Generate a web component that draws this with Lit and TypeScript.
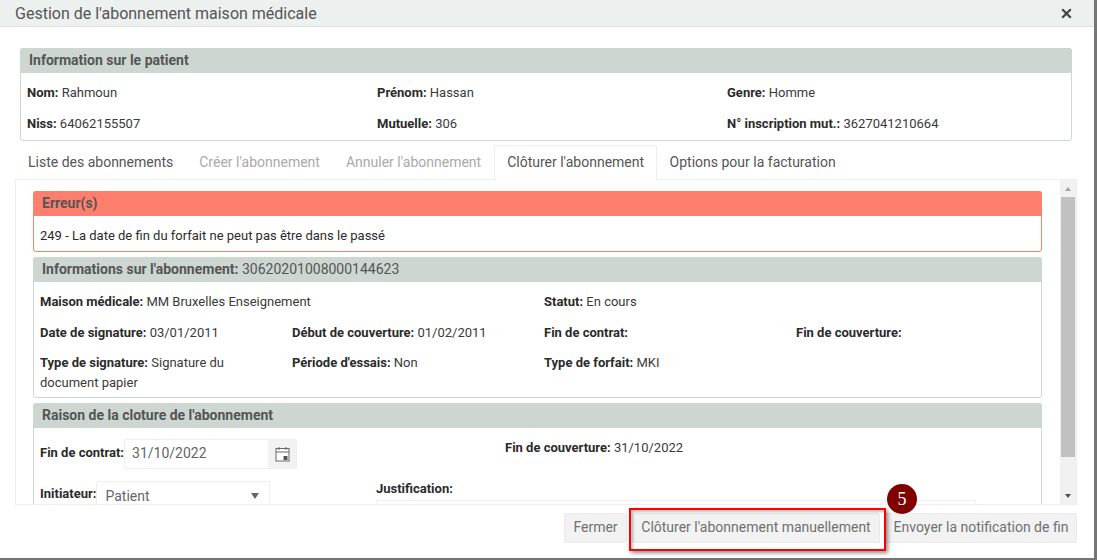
import { LitElement, html, css } from "lit";
import { customElement } from "lit/decorators.js";

@customElement("app-root")
export class AppRoot extends LitElement {
  static styles = css`
    :host { display: block; position: relative; width: 1097px; height: 560px; overflow: hidden; background: #fff; font-family: Roboto, sans-serif; font-size: 13px; color: #3a3a3a; }
    * { box-sizing: border-box; }
    b { font-weight: 700; color: #2b2b2b; }
    .modal { width: 1097px; height: 560px; border-right: 3px solid #757575; border-bottom: 2px solid #757575; display: flex; flex-direction: column; }
    .head { height: 27px; flex: none; background: #ecf0ee; border-bottom: 1px solid #dde2df; display: flex; align-items: center; justify-content: space-between; padding: 0 22px 0 15px; font-size: 16px; color: #555; }
    .close { width: 11px; height: 11px; display: block; }
    .patient { margin: 21px 22px 0 20px; flex: none; }
    .panel { border: 1px solid #cdd6d1; border-radius: 3px; background: #fff; }
    .panel .ttl { height: 25px; margin: -1px -1px 0; background: #cdd6d1; border-radius: 3px 3px 0 0; padding: 0 9px 2px; display: flex; align-items: center; font-size: 14px; font-weight: 700; color: #555; white-space: pre; }
    .panel .ttl span { font-weight: 400; }
    .pgrid { display: grid; grid-template-columns: repeat(3, 350px); padding: 4px 6px 1px; grid-auto-rows: 31px; align-items: center; }
    .tabs { flex: none; display: flex; height: 34px; margin: 4px 0 0 15px; position: relative; z-index: 1; font-size: 14px; }
    .tab { padding: 0 13px; height: 34px; display: flex; align-items: center; color: #555; white-space: nowrap; }
    .tab.off { color: #aaa; }
    .tab.on { background: #fff; border: 1px solid #eee; border-bottom: 0; border-radius: 2px 2px 0 0; padding: 0 11.5px 2px 12px; height: 35px; }
    .pane { margin: 0 17px 0 15px; height: 326px; flex: none; border: 1px solid #eee; display: flex; overflow: hidden; }
    .scroll { flex: 1; min-width: 0; overflow: hidden; padding: 11px 18px 0 17px; display: flex; flex-direction: column; gap: 5px; }
    .scroll .panel { flex: none; }
    .err { border-color: #ff7f6e; }
    .err .ttl { background: #ff7f6e; }
    .errbody { height: 35px; display: flex; align-items: center; padding: 3px 6px 0; color: #2b2b2b; }
    .igrid { display: grid; grid-template-columns: repeat(4, 252px); padding: 5px 6px 0; line-height: 20px; }
    .igrid > div { padding: 5px 0 6px; }
    .igrid .w2 { grid-column: span 2; }
    .igrid > .wrap { padding: 4px 40px 4px 0; }
    .igrid > .r3 { padding: 4px 0; }
    .form { padding: 11px 6px 0; }
    .f1 { display: flex; height: 42px; }
    .f1 .l { width: 465px; display: flex; flex: none; }
    .lab { font-weight: 700; color: #2b2b2b; white-space: nowrap; }
    .f1 .lab { padding-top: 6px; }
    .f1 .cov { padding-top: 1px; }
    .inp { width: 173px; height: 30px; border: 1px solid #eee; border-radius: 2px; display: flex; font-size: 14px; color: #666; }
    .inp .v { flex: 1; padding: 5px 7px; }
    .inp .btn { width: 28px; background: #f2f2f2; display: flex; align-items: center; justify-content: center; }
    .f2 { display: flex; }
    .f2 .l { width: 336px; flex: none; display: flex; }
    .f2 .l .lab { padding-top: 5px; }
    .sel { width: 174px; height: 30px; border: 1px solid #eee; border-radius: 2px; display: flex; align-items: center; justify-content: space-between; padding: 0 10px 0 8px; font-size: 14px; color: #666; }
    .caret { width: 0; height: 0; border-left: 4px solid transparent; border-right: 4px solid transparent; border-top: 6px solid #666; }
    .ta { width: 600px; height: 40px; margin-top: 4px; border: 1px solid #eee; border-radius: 2px; }
    .sb { width: 16px; flex: none; background: #f1f1f1; display: flex; flex-direction: column; padding: 0 1px; }
    .sb .arr { height: 17px; flex: none; display: flex; align-items: center; justify-content: center; }
    .sb .thumb { height: 260px; flex: none; background: #c1c1c1; }
    .sb .sp { flex: 1; }
    .up { width: 0; height: 0; border-left: 3.5px solid transparent; border-right: 3.5px solid transparent; border-bottom: 4px solid #a3a3a3; }
    .down { width: 0; height: 0; border-left: 3.5px solid transparent; border-right: 3.5px solid transparent; border-top: 4px solid #505050; }
    .foot { flex: none; display: flex; justify-content: flex-end; gap: 5px; padding: 8px 17px 0 0; }
    .b { height: 30px; padding-bottom: 2px; background: #f2f2f2; border: 1px solid #eaeaea; border-radius: 2px; display: flex; align-items: center; justify-content: center; font-size: 14px; color: #707070; white-space: nowrap; }
    .b1 { width: 63px; }
    .b2 { width: 248px; }
    .b3 { width: 192px; }
    .mark { position: absolute; left: 629px; top: 508px; width: 257px; height: 43px; border: 2px solid #f00; box-shadow: 2px 2px 4px rgba(0,0,0,.45), inset 2px 2px 3px rgba(0,0,0,.25); }
    .badge { position: absolute; left: 887px; top: 484px; width: 30px; height: 30px; border-radius: 50%; background: #800000; color: #fff; font-family: "Liberation Serif", serif; font-size: 18px; display: flex; align-items: center; justify-content: center; }
  `;

  render() {
    return html`
      <div class="modal">
        <div class="head">
          <span>Gestion de l'abonnement maison médicale</span>
          <svg class="close" viewBox="0 0 11 11"><path d="M1.2 1.2 9.8 9.8M9.8 1.2 1.2 9.8" stroke="#444" stroke-width="2.2" fill="none"/></svg>
        </div>
        <div class="panel patient">
          <div class="ttl">Information sur le patient</div>
          <div class="pgrid">
            <div><b>Nom:</b> Rahmoun</div>
            <div><b>Prénom:</b> Hassan</div>
            <div><b>Genre:</b> Homme</div>
            <div><b>Niss:</b> 64062155507</div>
            <div><b>Mutuelle:</b> 306</div>
            <div><b>N° inscription mut.:</b> 3627041210664</div>
          </div>
        </div>
        <div class="tabs">
          <div class="tab">Liste des abonnements</div>
          <div class="tab off">Créer l'abonnement</div>
          <div class="tab off">Annuler l'abonnement</div>
          <div class="tab on">Clôturer l'abonnement</div>
          <div class="tab">Options pour la facturation</div>
        </div>
        <div class="pane">
          <div class="scroll">
            <div class="panel err">
              <div class="ttl">Erreur(s)</div>
              <div class="errbody">249 - La date de fin du forfait ne peut pas être dans le passé</div>
            </div>
            <div class="panel">
              <div class="ttl">Informations sur l'abonnement: <span>30620201008000144623</span></div>
              <div class="igrid">
                <div class="w2"><b>Maison médicale:</b> MM Bruxelles Enseignement</div>
                <div class="w2"><b>Statut:</b> En cours</div>
                <div><b>Date de signature:</b> 03/01/2011</div>
                <div><b>Début de couverture:</b> 01/02/2011</div>
                <div><b>Fin de contrat:</b></div>
                <div><b>Fin de couverture:</b></div>
                <div class="wrap"><b>Type de signature:</b> Signature du document papier</div>
                <div class="r3"><b>Période d'essais:</b> Non</div>
                <div class="w2 r3"><b>Type de forfait:</b> MKI</div>
              </div>
            </div>
            <div class="panel">
              <div class="ttl">Raison de la cloture de l'abonnement</div>
              <div class="form">
                <div class="f1">
                  <div class="l">
                    <span class="lab">Fin de contrat:</span>
                    <div class="inp">
                      <div class="v">31/10/2022</div>
                      <div class="btn">
                        <svg width="15" height="16" viewBox="0 0 15 16"><rect x="1" y="2.5" width="13" height="12.5" fill="#fff" stroke="#666"/><path d="M1 6H14M4 1v3M11 1v3" stroke="#666" fill="none"/><rect x="8.5" y="10" width="4" height="4" fill="#555"/></svg>
                      </div>
                    </div>
                  </div>
                  <div class="cov"><b>Fin de couverture:</b> 31/10/2022</div>
                </div>
                <div class="f2">
                  <div class="l">
                    <span class="lab">Initiateur:</span>
                    <div class="sel"><span>Patient</span><span class="caret"></span></div>
                  </div>
                  <div>
                    <div class="lab">Justification:</div>
                    <div class="ta"></div>
                  </div>
                </div>
              </div>
            </div>
          </div>
          <div class="sb">
            <div class="arr"><span class="up"></span></div>
            <div class="thumb"></div>
            <div class="sp"></div>
            <div class="arr"><span class="down"></span></div>
          </div>
        </div>
        <div class="foot">
          <div class="b b1">Fermer</div>
          <div class="b b2">Clôturer l'abonnement manuellement</div>
          <div class="b b3">Envoyer la notification de fin</div>
        </div>
      </div>
      <div class="mark"></div>
      <div class="badge">5</div>
    `;
  }
}
